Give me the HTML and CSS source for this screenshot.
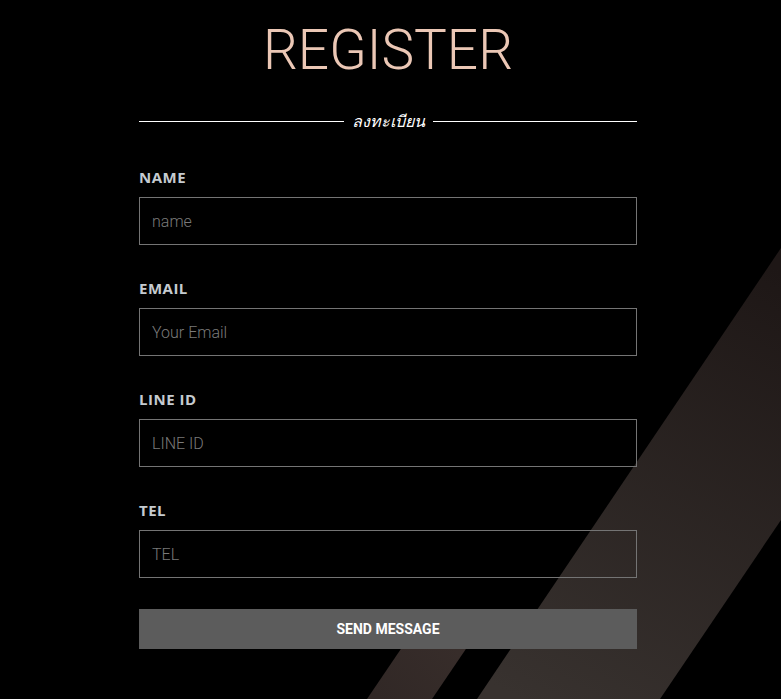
FILE: index.html
```html
<!DOCTYPE html>
<html lang="th">
<head>
<meta charset="utf-8">
<title>Register</title>
<link rel="stylesheet" href="styles.css">
</head>
<body>
<svg class="backdrop" width="781" height="699" viewBox="0 0 781 699" aria-hidden="true">
  <defs>
    <linearGradient id="bigStripe" gradientUnits="userSpaceOnUse" x1="760" y1="260" x2="520" y2="699">
      <stop offset="0" stop-color="#1e1716"/>
      <stop offset="1" stop-color="#38322f"/>
    </linearGradient>
    <linearGradient id="smallStripe" gradientUnits="userSpaceOnUse" x1="480" y1="609" x2="380" y2="699">
      <stop offset="0" stop-color="#3a2f2c"/>
      <stop offset="1" stop-color="#312826"/>
    </linearGradient>
  </defs>
  <polygon points="781,248 477,699 660,699 781,520" fill="url(#bigStripe)"/>
  <polygon points="428,609 493,609 432,699 367,699" fill="url(#smallStripe)"/>
</svg>
<main class="page">
  <h1 class="title">REGISTER</h1>
  <div class="divider">
    <span class="divider-line"></span>
    <span class="divider-text">ลงทะเบียน</span>
    <span class="divider-line"></span>
  </div>
  <form class="form">
    <div class="field">
      <label class="label" for="name">NAME</label>
      <input class="input" id="name" type="text" placeholder="name">
    </div>
    <div class="field">
      <label class="label" for="email">EMAIL</label>
      <input class="input" id="email" type="email" placeholder="Your Email">
    </div>
    <div class="field">
      <label class="label" for="line">LINE ID</label>
      <input class="input" id="line" type="text" placeholder="LINE ID">
    </div>
    <div class="field">
      <label class="label" for="tel">TEL</label>
      <input class="input" id="tel" type="tel" placeholder="TEL">
    </div>
    <button class="submit" type="button">SEND MESSAGE</button>
  </form>
</main>
</body>
</html>
```
FILE: styles.css
```css
html, body {
  margin: 0;
  padding: 0;
  background: #000;
}
body {
  position: relative;
  width: 781px;
  height: 699px;
  overflow: hidden;
  font-family: Roboto, "Liberation Sans", sans-serif;
}
.backdrop {
  position: absolute;
  left: 0;
  top: 0;
  z-index: 0;
}
.page {
  position: relative;
  z-index: 1;
  width: 498px;
  padding: 23px 0 0 139px;
  box-sizing: content-box;
}
.title {
  margin: 0;
  font-family: Roboto, sans-serif;
  font-weight: 300;
  font-size: 55px;
  line-height: 55px;
  text-align: center;
  color: #ebc7b5;
  letter-spacing: 0;
}
.divider {
  display: flex;
  align-items: center;
  gap: 8px;
  height: 20px;
  margin-top: 33px;
}
.divider-line {
  flex: 1;
  height: 1px;
  background: #fff;
}
.divider-text {
  font-family: "Noto Sans", "DejaVu Sans", sans-serif;
  font-style: italic;
  font-size: 16px;
  line-height: 20px;
  color: #fff;
}
.form {
  display: flex;
  flex-direction: column;
  gap: 33px;
  margin-top: 36px;
}
.field {
  display: flex;
  flex-direction: column;
  gap: 10px;
}
.label {
  font-family: "Open Sans", sans-serif;
  font-weight: 700;
  font-size: 15px;
  line-height: 20px;
  letter-spacing: 0.5px;
  color: #c5cbd0;
}
.input {
  box-sizing: border-box;
  width: 498px;
  height: 48px;
  margin: 0;
  padding: 0 12px;
  border: 1px solid #747474;
  border-radius: 0;
  background: transparent;
  font-family: Roboto, sans-serif;
  font-weight: 300;
  font-size: 16px;
  color: #ddd;
  outline: none;
}
.input::placeholder {
  color: #7a7a7a;
  opacity: 1;
}
.submit {
  margin-top: -2px;
  width: 498px;
  height: 40px;
  border: 0;
  border-radius: 0;
  background: #5c5c5c;
  color: #fff;
  font-family: Roboto, sans-serif;
  font-weight: 700;
  font-size: 14px;
  letter-spacing: 0;
  cursor: pointer;
}
```
